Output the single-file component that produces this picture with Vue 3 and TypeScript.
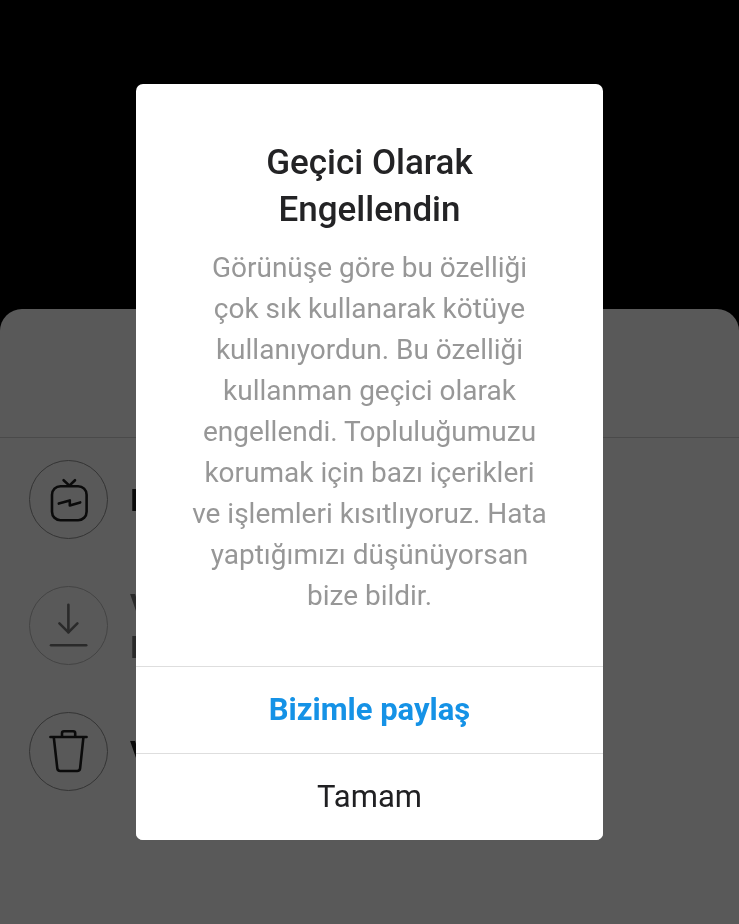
<script setup lang="ts">
import { ref } from 'vue'

type IconName = 'tv' | 'download' | 'trash'

interface SheetAction {
  icon: IconName
  lines: string[]
  disabled: boolean
}

const actions: SheetAction[] = [
  { icon: 'tv', lines: ['I'], disabled: false },
  { icon: 'download', lines: ['V', 'I'], disabled: true },
  { icon: 'trash', lines: ['V'], disabled: false },
]

const open = ref(true)

function close(): void {
  open.value = false
}
</script>

<template>
  <div class="screen">
    <section class="sheet" :inert="open">
      <div class="sheet-header"></div>
      <button
        v-for="action in actions"
        :key="action.icon"
        type="button"
        class="action"
        :disabled="action.disabled"
      >
        <span class="badge">
          <svg v-if="action.icon === 'tv'" class="icon" viewBox="0 0 79 79" aria-hidden="true">
            <rect x="23" y="26.2" width="34.6" height="34" rx="8.5" />
            <path d="M34.6 20.2 40.4 25.6 46 20.2" />
            <path d="M29.8 43.6 40.8 40.4V45.4L51.2 42.4" />
          </svg>
          <svg v-else-if="action.icon === 'download'" class="icon" viewBox="0 0 79 79" aria-hidden="true">
            <path d="M39.4 18.8V46.2" />
            <path d="M30.4 37.4 39.4 46.4 48.4 37.4" />
            <path d="M22 59.3H57.2" />
          </svg>
          <svg v-else class="icon" viewBox="0 0 79 79" aria-hidden="true">
            <path d="M21.4 25H57.6" />
            <path d="M33 24.6V21.2Q33 19.3 35 19.3H44.2Q46.2 19.3 46.2 21.2V24.6" />
            <path d="M24.8 25.4 28.3 56.4Q28.6 59 31.2 59H48.2Q50.8 59 51.1 56.4L54.4 25.4" />
          </svg>
        </span>
        <span class="label">
          <span v-for="line in action.lines" :key="line" class="label-line">{{ line }}</span>
        </span>
      </button>
    </section>

    <div v-if="open" class="overlay">
      <div class="dialog" role="alertdialog" aria-modal="true" aria-labelledby="dialog-title" aria-describedby="dialog-text">
        <div class="content">
          <h1 id="dialog-title" class="title">Geçici Olarak Engellendin</h1>
          <p id="dialog-text" class="text">
            Görünüşe göre bu özelliği çok sık kullanarak kötüye kullanıyordun. Bu özelliği kullanman
            geçici olarak engellendi. Topluluğumuzu korumak için bazı içerikleri ve işlemleri
            kısıtlıyoruz. Hata yaptığımızı düşünüyorsan bize bildir.
          </p>
        </div>
        <button type="button" class="choice primary" @click="close">Bizimle paylaş</button>
        <button type="button" class="choice" @click="close">Tamam</button>
      </div>
    </div>
  </div>
</template>

<style>
body {
  background: #000;
}
</style>

<style scoped>
.screen {
  display: flex;
  flex-direction: column;
  min-height: 100vh;
  background: #000;
  font-family: Roboto, "Noto Sans", sans-serif;
}

.sheet {
  display: flex;
  flex-direction: column;
  margin-top: auto;
  padding-bottom: 108px;
  border-radius: 22px 22px 0 0;
  background: #fff;
}

.sheet-header {
  height: 128px;
  border-bottom: 1px solid #d4d4d4;
}

.action {
  display: flex;
  align-items: center;
  gap: 22px;
  min-height: 126px;
  padding: 0 29px;
  border: 0;
  background: none;
  color: #202020;
  font: 700 31px/42px Roboto, "Noto Sans", sans-serif;
  text-align: left;
}

.action:disabled {
  opacity: 0.6;
}

.badge {
  flex: none;
  box-sizing: border-box;
  width: 79px;
  height: 79px;
  margin-bottom: 4px;
  border: 1px solid #949494;
  border-radius: 50%;
}

.icon {
  display: block;
  width: 79px;
  height: 79px;
  margin: -1px;
  fill: none;
  stroke: currentColor;
  stroke-width: 2.6;
  stroke-linecap: round;
  stroke-linejoin: round;
}

.label {
  will-change: transform;
}

.label-line {
  display: block;
}

.overlay {
  position: fixed;
  inset: 0;
  display: flex;
  align-items: center;
  justify-content: center;
  padding: 16px;
  background: rgba(0, 0, 0, 0.65);
}

.dialog {
  display: flex;
  flex-direction: column;
  width: 100%;
  max-width: 467px;
  border-radius: 7px;
  overflow: hidden;
  background: #fff;
}

.content {
  padding: 55px 56px 50px;
  text-align: center;
}

.title {
  margin: 0 0 14px;
  color: #232325;
  font-size: 35px;
  font-weight: 500;
  line-height: 47px;
}

.text {
  margin: 0;
  color: #979797;
  font-size: 28px;
  line-height: 41px;
}

.choice {
  height: 87px;
  padding: 0;
  border: 0;
  border-top: 1px solid #dedede;
  background: #fff;
  color: #202022;
  font: 400 31px/40px Roboto, "Noto Sans", sans-serif;
  cursor: pointer;
}

.primary {
  color: #1592e6;
  font-weight: 700;
}
</style>
